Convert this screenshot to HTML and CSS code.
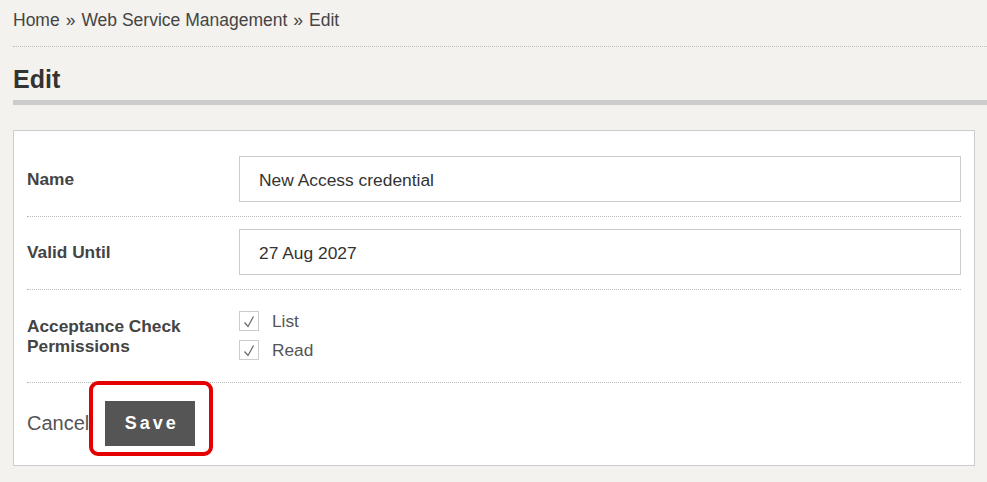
FILE: index.html
```html
<!DOCTYPE html>
<html>
<head>
<meta charset="utf-8">
<link rel="stylesheet" href="styles.css">
</head>
<body>
<div class="page">
  <div class="breadcrumb">
    <span class="crumb">Home</span><span class="sep">»</span><span class="crumb">Web Service Management</span><span class="sep">»</span><span class="crumb current">Edit</span>
  </div>
  <h1 class="title">Edit</h1>
  <div class="card">
    <div class="row">
      <div class="label">Name</div>
      <div class="field"><div class="input">New Access credential</div></div>
    </div>
    <div class="row">
      <div class="label">Valid Until</div>
      <div class="field"><div class="input">27 Aug 2027</div></div>
    </div>
    <div class="row row-checks">
      <div class="label">Acceptance Check<br>Permissions</div>
      <div class="field checks">
        <div class="check">
          <span class="box"><svg width="18" height="18" viewBox="0 0 18 18"><path d="M4.5 10.5 L8 14.5 L13.5 4.5" fill="none" stroke="#666" stroke-width="1.2"/></svg></span>
          <span class="check-label">List</span>
        </div>
        <div class="check">
          <span class="box"><svg width="18" height="18" viewBox="0 0 18 18"><path d="M4.5 10.5 L8 14.5 L13.5 4.5" fill="none" stroke="#666" stroke-width="1.2"/></svg></span>
          <span class="check-label">Read</span>
        </div>
      </div>
    </div>
    <div class="actions">
      <span class="cancel">Cancel</span>
      <span class="save-wrap"><span class="save">Save</span><span class="highlight"></span></span>
    </div>
  </div>
</div>
</body>
</html>
```
FILE: styles.css
```css
html, body {
  margin: 0;
  padding: 0;
  background: #f3f2ee;
  font-family: "Liberation Sans", Arial, sans-serif;
  color: #444;
}
.page {
  padding-left: 13px;
}
.breadcrumb {
  font-size: 17.5px;
  line-height: 20px;
  padding-top: 10px;
  padding-bottom: 16px;
  border-bottom: 1px dotted #bbb;
  color: #444;
}
.sep {
  margin: 0 6px;
}
.title {
  margin: 0;
  font-size: 25px;
  line-height: 30px;
  font-weight: bold;
  color: #333;
  padding-top: 17px;
  padding-bottom: 6px;
  border-bottom: 5px solid #ccc;
}
.card {
  margin-top: 25px;
  margin-right: 12px;
  background: #fff;
  border: 1px solid #ccc;
  padding: 13px 13px 0 13px;
}
.row {
  display: flex;
  align-items: center;
  padding: 12px 0 14px;
  border-bottom: 1px dotted #bbb;
}
.label {
  width: 212px;
  flex: none;
  font-weight: bold;
  font-size: 17.3px;
  line-height: 20px;
  color: #444;
}
.field {
  flex: 1;
}
.input {
  box-sizing: border-box;
  height: 46px;
  border: 1px solid #ccc;
  padding-left: 19px;
  font-size: 17.4px;
  line-height: 46px;
  color: #333;
}
.row-checks {
  padding: 21px 0 22px;
}
.checks {
  display: flex;
  flex-direction: column;
  gap: 9px;
}
.check {
  display: flex;
  align-items: center;
  gap: 13px;
  height: 20px;
}
.box {
  box-sizing: border-box;
  width: 20px;
  height: 20px;
  border: 1px solid #ccc;
  display: flex;
  align-items: center;
  justify-content: center;
}
.check-label {
  font-size: 17.3px;
  color: #555;
}
.actions {
  display: flex;
  align-items: center;
  padding: 18px 0 19px;
  gap: 16px;
}
.cancel {
  font-size: 20px;
  color: #555;
}
.save-wrap {
  position: relative;
  display: block;
}
.save {
  display: block;
  width: 90px;
  height: 45px;
  line-height: 45px;
  text-align: center;
  background: #555;
  color: #fff;
  font-weight: bold;
  font-size: 18px;
  letter-spacing: 3px;
  text-indent: 3px;
}
.highlight {
  position: absolute;
  left: -16px;
  top: -20px;
  width: 124px;
  height: 75px;
  box-sizing: border-box;
  border: 4px solid #e40000;
  border-radius: 9px;
}
```
